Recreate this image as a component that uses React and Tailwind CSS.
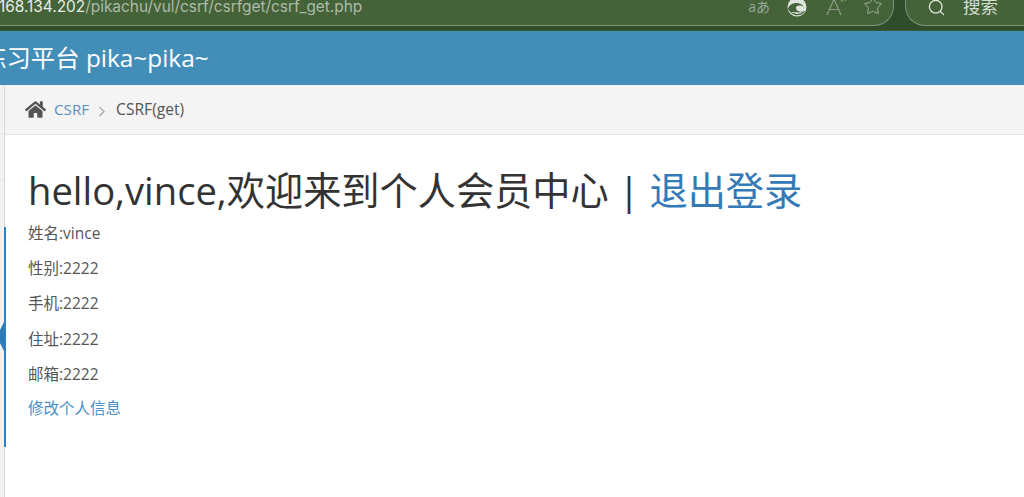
import React from 'react';
import { Search, Star } from 'lucide-react';
import { FaHome } from 'react-icons/fa';

const fields = [
  ['姓名', 'vince'],
  ['性别', '2222'],
  ['手机', '2222'],
  ['住址', '2222'],
  ['邮箱', '2222'],
];

const font = "font-['Open_Sans','Noto_Sans_CJK_SC',sans-serif]";

const BrowserBar = () => (
  <div className="h-[31px] bg-[#2f4d2b] overflow-hidden shrink-0 border-b border-[#3a5a33]">
    <div className="h-[26px] flex gap-[11px]">
      <div className="w-[894px] h-[26px] bg-[#446339] border-b border-r border-[#7c9273] rounded-br-[20px] flex justify-between pr-[10px] overflow-hidden">
        <div className="text-[15.4px] leading-[15px] whitespace-nowrap font-['Inter',sans-serif] -ml-[1px] -mt-[1px]">
          <span className="text-[#e6ece3]">168.134.202</span>
          <span className="text-[#aebba8]">/pikachu/vul/csrf/csrfget/csrf_get.php</span>
        </div>
        <div className="flex items-start -mt-[3px]">
          <span className="text-[14px] leading-[20px] text-[#9aa895] whitespace-nowrap mr-[17px]">aあ</span>
          <svg width="20" height="20" viewBox="0 0 20 20" className="mr-[19px]">
            <circle cx="10" cy="10" r="9.500" fill="#dfe3dc" />
            <path d="M1 12C3 5 13 4 17 10c-3-2-8-2-8 1 0 3 5 5 9 3-3 6-13 6-17-2z" fill="#446339" />
            <path d="M4 15c3 2 9 3 12 0-4 1-9 0-12 0z" fill="#dfe3dc" />
          </svg>
          <svg width="22" height="20" viewBox="0 0 22 20" fill="none" stroke="#8d9c87" strokeWidth="1.200" className="mr-[15px]">
            <path d="M1 18 8 2l7 16M3.500 12.500h9" />
            <path d="M14 2c1 .5 2 1.500 2.500 3M17 1c1 .5 2 1.500 2.500 3" />
          </svg>
          <Star size={20} strokeWidth={1.2} className="text-[#a3b09d] -mt-[1px]" />
        </div>
      </div>
      <div className="flex-1 h-[26px] bg-[#446339] border-b border-l border-[#7c9273] rounded-bl-[20px] flex items-start gap-[17px] pl-[21px]">
        <Search size={19} strokeWidth={1.6} className="text-[#e2e7df] -mt-[2px]" />
        <span className="text-[17.5px] leading-[18px] text-[#d5dcd1] -mt-[3px] whitespace-nowrap font-['Noto_Sans_CJK_SC',sans-serif]">搜索</span>
      </div>
    </div>
  </div>
);

const App = () => {
  return (
    <div className={`w-[1024px] h-[497px] overflow-hidden flex flex-col bg-white ${font}`}>
      <BrowserBar />

      <div className="h-[54px] bg-[#438eb9] shrink-0 flex items-center overflow-hidden">
        <span className="text-[24.4px] text-white whitespace-nowrap -ml-[18px]">练习平台 pika~pika~</span>
      </div>

      <div className="flex-1 flex">
        <div className="w-[5px] bg-[#f2f2f2] border-r border-[#d8d8d8] flex flex-col relative shrink-0">
          <div className="h-[49px] border-b border-[#e5e5e5]" />
          <div className="h-[46px] border-b border-[#e5e5e5]" />
          <div className="absolute left-[4px] top-[142px] w-[2px] h-[220px] bg-[#2b83c4]" />
          <svg width="5" height="33" viewBox="0 0 5 33" className="absolute left-0 top-[235px]">
            <path d="M5 0 0 10v13l5 10z" fill="#2b7cb8" />
          </svg>
        </div>

        <div className="flex-1 flex flex-col">
          <div className="h-[50px] bg-[#f4f4f4] border-b border-[#e5e5e5] flex items-center pl-[20px] text-[15.2px] shrink-0">
            <FaHome size={21} className="text-[#555] mr-[8px]" />
            <span className="text-[#5b90bd]">CSRF</span>
            <svg width="8" height="11" viewBox="0 0 8 11" fill="none" stroke="#aaa" strokeWidth="1.300" className="ml-[9px] mr-[10px] mt-[3px]">
              <path d="M1.500 1 6 5.500 1.500 10" />
            </svg>
            <span className="text-[15.600px] text-[#555]">CSRF(get)</span>
          </div>

          <div className="pl-[23px] pt-[30px]">
            <h1 className="text-[38.2px] leading-[50px] text-[#333] whitespace-nowrap">
              hello,vince,欢迎来到个人会员中心 | <a className="text-[#337ab7]">退出登录</a>
            </h1>
            <div className="mt-[8px] flex flex-col gap-[14.500px]">
              {fields.map(([label, value]) => (
                <p key={label} className="text-[15.500px] leading-[20.700px] text-[#555]">{label}:{value}</p>
              ))}
            </div>
            <a className="block mt-[13px] text-[15.500px] leading-[20px] text-[#4c8fc4]">修改个人信息</a>
          </div>
        </div>
      </div>
    </div>
  );
};

export default App;
